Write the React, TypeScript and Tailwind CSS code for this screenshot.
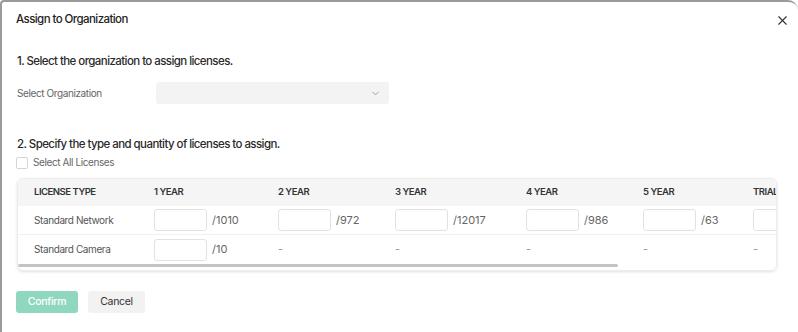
import { X, ChevronDown } from "lucide-react";

type Cell = { total?: string };

const columns = [
  { label: "1 YEAR", w: "w-[124px]" },
  { label: "2 YEAR", w: "w-[117px]" },
  { label: "3 YEAR", w: "w-[131px]" },
  { label: "4 YEAR", w: "w-[117px]" },
  { label: "5 YEAR", w: "w-[110px]" },
  { label: "TRIAL", w: "w-[80px]" },
];

const rows: { name: string; cells: Cell[] }[] = [
  {
    name: "Standard Network",
    cells: [
      { total: "/1010" },
      { total: "/972" },
      { total: "/12017" },
      { total: "/986" },
      { total: "/63" },
      { total: "" },
    ],
  },
  {
    name: "Standard Camera",
    cells: [{ total: "/10" }, {}, {}, {}, {}, {}],
  },
];

function QtyCell({ cell, w }: { cell: Cell; w: string }) {
  return (
    <div className={`${w} shrink-0 flex items-center`}>
      {cell.total !== undefined ? (
        <>
          <input className="w-[53px] h-[22px] border border-[#e2e2e2] rounded-[3px] bg-white outline-none" />
          <span className="ml-[5px] text-[11px] text-[#666]">{cell.total}</span>
        </>
      ) : (
        <span className="text-[11px] text-[#999]">-</span>
      )}
    </div>
  );
}

export default function App() {
  return (
    <div
      className="w-[798px] h-[332px] overflow-hidden bg-white"
      style={{ fontFamily: "Inter, 'Noto Sans', sans-serif" }}
    >
      <div className="h-[340px] border-t-2 border-l-2 border-[#9a9a9a] rounded-tl-[4px] rounded-tr-[10px] bg-white">
        <div className="flex items-center justify-between pl-[14px] pr-[8px] h-[36px]">
          <h1 className="text-[11.5px] font-medium text-[#222] tracking-[-0.05em]">Assign to Organization</h1>
          <X size={15} strokeWidth={1.8} className="text-[#333]" />
        </div>

        <div className="pl-[15px] pt-[14px]">
          <h2 className="text-[11.5px] font-medium text-[#2a2a2a] leading-[18px] tracking-[-0.05em]">
            1. Select the organization to assign licenses.
          </h2>
          <div className="flex items-center mt-[12px]">
            <span className="w-[139px] text-[10px] text-[#666] tracking-[-0.04em]">Select Organization</span>
            <div className="w-[233px] h-[22px] bg-[#f3f3f3] rounded-[3px] flex items-center justify-end pr-[8px]">
              <ChevronDown size={11} className="text-[#999]" />
            </div>
          </div>

          <h2 className="mt-[31px] text-[11.5px] font-medium text-[#2a2a2a] leading-[18px] tracking-[-0.05em]">
            2. Specify the type and quantity of licenses to assign.
          </h2>
          <label className="flex items-center mt-[2px] -ml-px">
            <span className="w-[12px] h-[12px] border border-[#d5d5d5] rounded-[2px] bg-white" />
            <span className="ml-[5px] text-[10px] text-[#666] tracking-[-0.04em]">Select All Licenses</span>
          </label>

          <div className="mt-[8px] w-[760px] rounded-[6px] border border-[#ececec] shadow-[0_1px_3px_rgba(0,0,0,0.12)] overflow-hidden">
            <div className="flex h-[27px] items-center bg-[#f5f5f5] text-[9.5px] font-semibold text-[#333] tracking-[-0.05em]">
              <div className="w-[136px] shrink-0 pl-[16px]">LICENSE TYPE</div>
              {columns.map((c) => (
                <div key={c.label} className={`${c.w} shrink-0`}>
                  {c.label}
                </div>
              ))}
            </div>
            {rows.map((r, i) => (
              <div
                key={r.name}
                className={`flex h-[29px] items-center ${i === 0 ? "border-b border-[#f0f0f0]" : ""}`}
              >
                <div className="w-[136px] shrink-0 pl-[16px] text-[10px] text-[#555] tracking-[-0.04em]">{r.name}</div>
                {r.cells.map((c, j) => (
                  <QtyCell key={j} cell={c} w={columns[j].w} />
                ))}
              </div>
            ))}
            <div className="h-[6px] flex items-start">
              <div className="h-[3px] w-[600px] bg-[#c4c4c4] rounded-full" />
            </div>
          </div>

          <div className="flex gap-[10px] mt-[20px] -ml-px">
            <button className="w-[62px] h-[22px] rounded-[3px] bg-[#8fd8bf] text-white text-[10.5px] font-medium tracking-[-0.03em]">
              Confirm
            </button>
            <button className="w-[57px] h-[22px] rounded-[3px] bg-[#f2f2f2] text-[#333] text-[10.5px] tracking-[-0.03em]">
              Cancel
            </button>
          </div>
        </div>
      </div>
    </div>
  );
}
